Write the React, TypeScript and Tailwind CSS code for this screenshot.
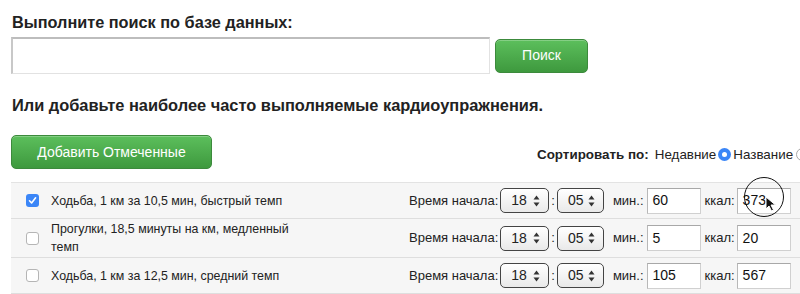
import { useState } from "react";

interface Exercise {
  id: number;
  name: string;
  hour: string;
  minute: string;
  minutes: string;
  kcal: string;
  checked: boolean;
}

const initial: Exercise[] = [
  { id: 1, name: "Ходьба, 1 км за 10,5 мин, быстрый темп", hour: "18", minute: "05", minutes: "60", kcal: "373", checked: true },
  { id: 2, name: "Прогулки, 18,5 минуты на км, медленный темп", hour: "18", minute: "05", minutes: "5", kcal: "20", checked: false },
  { id: 3, name: "Ходьба, 1 км за 12,5 мин, средний темп", hour: "18", minute: "05", minutes: "105", kcal: "567", checked: false },
];

const greenBtn =
  "rounded-[5px] border border-[#3c8a3c] bg-gradient-to-b from-[#5cbf5c] to-[#3e993e] text-white text-[14px] shadow-[inset_0_1px_0_rgba(255,255,255,0.25)]";

function Stepper({ value }: { value: string }) {
  return (
    <div className="flex h-[25px] w-full items-center justify-between rounded-[5px] border border-[#444] bg-gradient-to-b from-white to-[#e9e9e9] pl-[10px] pr-[8px] text-[14px] text-[#222]">
      <span>{value}</span>
      <svg width="7" height="12" viewBox="0 0 7 12">
        <path d="M3.5 0.5 L6.5 4.5 L0.5 4.5 Z" fill="#333" />
        <path d="M3.5 11.5 L6.5 7.5 L0.5 7.5 Z" fill="#333" />
      </svg>
    </div>
  );
}

function Field({ value }: { value: string }) {
  return (
    <div className="flex h-[26px] w-[54px] items-center border border-[#d0d0d0] border-t-[#a8a8a8] border-l-[#b8b8b8] bg-white px-[5px] text-[14px] text-[#111]">
      {value}
    </div>
  );
}

export default function App() {
  const [rows, setRows] = useState(initial);
  const [sort, setSort] = useState<"recent" | "name">("recent");

  const toggle = (id: number) =>
    setRows((r) => r.map((x) => (x.id === id ? { ...x, checked: !x.checked } : x)));

  return (
    <div
      className="relative h-[294px] w-[800px] overflow-hidden bg-white text-[#222]"
      style={{ fontFamily: '"Liberation Sans", Arial, sans-serif' }}
    >
      <div className="w-[830px] pl-[11px] pt-[12px]">
        <h2 className="pl-[1px] text-[16.3px] font-bold leading-[20px]">Выполните поиск по базе данных:</h2>

        <div className="mt-[5px] flex items-center gap-[5px]">
          <div className="h-[37px] w-[479px] border border-[#e2e2e2] border-t-2 border-t-[#bdbdbd] border-l-2 border-l-[#c8c8c8] bg-white" />
          <button className={`${greenBtn} h-[34px] w-[93px]`}>Поиск</button>
        </div>

        <h2 className="mt-[21px] pl-[1px] text-[16.4px] font-bold leading-[20px]">
          Или добавьте наиболее часто выполняемые кардиоупражнения.
        </h2>

        <div className="mt-[20px] flex items-end">
          <button className={`${greenBtn} h-[34px] w-[201px]`}>Добавить Отмеченные</button>
          <div className="ml-[325px] flex items-center pb-[4px] text-[13.4px]">
            <span className="font-bold">Сортировать по:</span>
            <span className="ml-[6px]">Недавние</span>
            <button
              onClick={() => setSort("recent")}
              className={`ml-[2px] flex h-[13px] w-[13px] items-center justify-center rounded-full ${
                sort === "recent" ? "bg-[#3b86f7]" : "border border-[#aaa] bg-white"
              }`}
            >
              {sort === "recent" && <span className="h-[5px] w-[5px] rounded-full bg-white" />}
            </button>
            <span className="ml-[2px]">Название</span>
            <button
              onClick={() => setSort("name")}
              className={`ml-[3px] flex h-[13px] w-[13px] items-center justify-center rounded-full ${
                sort === "name" ? "bg-[#3b86f7]" : "border border-[#aaa] bg-white"
              }`}
            >
              {sort === "name" && <span className="h-[5px] w-[5px] rounded-full bg-white" />}
            </button>
          </div>
        </div>

        <div className="mt-[13px] border-t border-[#e3e3e3]">
          {rows.map((row, i) => (
            <div
              key={row.id}
              className={`flex items-center border-b border-[#dedede] bg-[#f6f6f6] text-[13px] ${
                i === 1 ? "h-[39px]" : "h-[36px]"
              }`}
            >
              <div className="flex w-[40px] justify-center pl-[2px]">
                <button
                  onClick={() => toggle(row.id)}
                  className={`flex h-[13px] w-[13px] items-center justify-center rounded-[3px] ${
                    row.checked ? "bg-[#3b86f7]" : "border border-[#b5b5b5] bg-white"
                  }`}
                >
                  {row.checked && (
                    <svg width="9" height="9" viewBox="0 0 9 9">
                      <path d="M1.5 4.8 L3.6 7 L7.6 1.8" fill="none" stroke="white" strokeWidth="1.6" strokeLinecap="round" strokeLinejoin="round" />
                    </svg>
                  )}
                </button>
              </div>
              <div className="w-[358px] pr-[100px] text-[12.4px] leading-[18px]">{row.name}</div>
              <span>Время начала:</span>
              <div className="ml-[2px] w-[49px]">
                <Stepper value={row.hour} />
              </div>
              <span className="mx-[2px]">:</span>
              <div className="w-[47px]">
                <Stepper value={row.minute} />
              </div>
              <span className="ml-[9px] mr-[3px]">мин.:</span>
              <Field value={row.minutes} />
              <span className="ml-[4px] mr-[2px]">ккал:</span>
              <Field value={row.kcal} />
            </div>
          ))}
        </div>
      </div>

      {/* click indicator from the screen capture */}
      <div className="pointer-events-none absolute left-[744px] top-[177px] h-[40px] w-[40px] rounded-full border-[1.5px] border-[#111]" />
      <svg className="pointer-events-none absolute left-[765px] top-[196px]" width="12" height="16" viewBox="0 0 12 16">
        <path d="M1 1 L1 13 L4 10 L6.5 15 L8.5 14 L6 9 L10.5 9 Z" fill="#111" stroke="white" strokeWidth="1" />
      </svg>
    </div>
  );
}
